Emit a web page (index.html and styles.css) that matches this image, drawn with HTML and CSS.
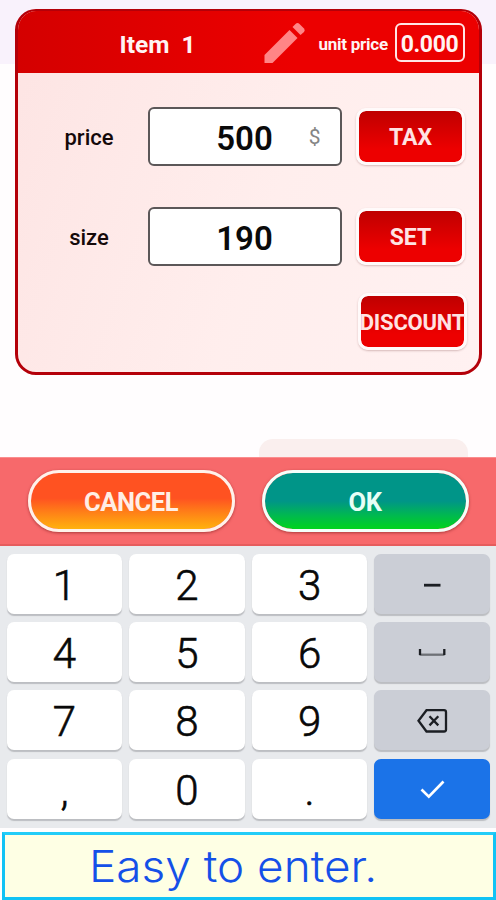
FILE: index.html
```html
<!DOCTYPE html>
<html lang="en">
  <head>
    <meta charset="UTF-8" />
    <meta name="viewport" content="width=device-width, initial-scale=1.0" />
    <title>Unit price calculator</title>
    <link rel="stylesheet" href="styles.css">
  </head>
  <body>
    <!-- Item card -->
    <div class="main-content">
      <div class="item-card">
        <div class="item-header">
          <h1>Item&nbsp; 1</h1>
          <svg class="edit-icon" viewBox="0 0 40 40">
            <path d="M0 32 L25 7 L33 15 L8 40 H0 Z" />
            <path d="M28 4 L31 1 Q33 -1 35 1 L39.5 5.5 Q41 7 39.5 9 L36 12 Z" />
          </svg>
          <span class="unit-label">unit price</span>
          <span class="unit-value">0.000</span>
        </div>
        <div class="item-body">
          <label class="field-label">price</label>
          <div class="field">500<span class="currency">$</span></div>
          <button class="red-button">TAX</button>

          <label class="field-label">size</label>
          <div class="field">190</div>
          <button class="red-button">SET</button>

          <button class="red-button discount-button">DISCOUNT</button>
        </div>
      </div>
      <div class="next-button"></div>
    </div>

    <!-- Confirm bar -->
    <div class="action-bar">
      <button class="pill cancel-button">CANCEL</button>
      <button class="pill ok-button">OK</button>
    </div>

    <!-- Number pad -->
    <div class="keypad">
      <button class="key">1</button>
      <button class="key">2</button>
      <button class="key">3</button>
      <button class="key key-gray">
        <svg width="32" height="32" viewBox="0 0 32 32"><path d="M8 17.2 H24.5" stroke-width="2.8" /></svg>
      </button>
      <button class="key">4</button>
      <button class="key">5</button>
      <button class="key">6</button>
      <button class="key key-gray">
        <svg width="32" height="32" viewBox="0 0 32 32"><path class="soft" d="M3.5 18.7 H28.5" /><path d="M4 13 V19 M28.3 13 V19" /></svg>
      </button>
      <button class="key">7</button>
      <button class="key">8</button>
      <button class="key">9</button>
      <button class="key key-gray">
        <svg width="32" height="32" viewBox="0 0 32 32"><path d="M10.5 6.2 H28 Q30 6.2 30 8.2 V25.5 Q30 27.5 28 27.5 H10.5 L2.5 16.8 Z M13.5 12.2 L22.3 21.4 M22.3 12.2 L13.5 21.4" /></svg>
      </button>
      <button class="key">,</button>
      <button class="key">0</button>
      <button class="key">.</button>
      <button class="key key-enter">
        <svg width="32" height="32" viewBox="0 0 32 32"><path d="M5.5 16.5 L12.8 23.6 L27.5 8.5" stroke-width="2.7" /></svg>
      </button>
    </div>

    <!-- Caption -->
    <div class="caption"><span class="caption-text">Easy to enter.</span></div>
  </body>
</html>
```

FILE: styles.css
```css
* {
  box-sizing: border-box;
}
body {
  margin: 0;
  width: 496px;
  height: 900px;
  overflow: hidden;
  display: flex;
  flex-direction: column;
  font-family: Roboto, "Liberation Sans", sans-serif;
  background-color: #fffdfe;
}
button {
  font-family: inherit;
  border: none;
  padding: 0;
  cursor: pointer;
}
.main-content {
  height: 457px;
  flex: none;
  padding: 9px 14px 0 14.5px;
  background: linear-gradient(#f9f2fc 64px, #fffdfe 64px);
}
.item-card {
  height: 366px;
  border: 3px solid #b40009;
  border-width: 2px 3.5px 3.5px;
  border-radius: 21px;
  background: linear-gradient(110deg, #fde4e3, #ffeeed 55%, #fff1f1);
  overflow: hidden;
}
.item-header {
  height: 61.5px;
  margin: 0 -2px;
  padding: 1px 16px 0 104px;
  display: flex;
  align-items: center;
  color: #fff3f3;
  background: linear-gradient(90deg, #d40000, #ec0000 60%);
}
.item-header h1 {
  width: 144px;
  margin: 0;
  font-size: 24.5px;
  font-weight: 700;
  white-space: nowrap;
  padding-top: 5px;
}
.edit-icon {
  width: 41px;
  height: 40px;
  margin-top: 2px;
  fill: #ff8586;
  flex: none;
  overflow: visible;
}
.unit-label {
  margin-left: 14px;
  width: 76px;
  font-size: 17px;
  font-weight: 700;
  letter-spacing: -0.25px;
  white-space: nowrap;
  padding-top: 3px;
}
.unit-value {
  width: 70px;
  height: 39px;
  flex: none;
  border: 2.5px solid #ffe5e5;
  border-radius: 6px;
  display: flex;
  justify-content: center;
  align-items: center;
  font-size: 23px;
  font-weight: 700;
  letter-spacing: -0.4px;
  padding-top: 4px;
}
.item-body {
  display: grid;
  grid-template-columns: 130px 194px 108px;
  grid-template-rows: 59px 59px 56px;
  row-gap: 41px;
  padding-top: 34.5px;
}
.field-label {
  align-self: center;
  width: 143px;
  text-align: center;
  font-size: 22px;
  font-weight: 500;
  color: #15090a;
  padding-top: 2px;
}
.field {
  position: relative;
  display: flex;
  justify-content: center;
  align-items: center;
  background-color: white;
  border: 2px solid #5b5758;
  border-radius: 6px;
  font-size: 33px;
  font-weight: 600;
  color: #0a0a0a;
  padding-top: 3px;
}
.currency {
  position: absolute;
  right: 19px;
  top: 15px;
  font-size: 21px;
  line-height: 26px;
  font-weight: 400;
  color: #858585;
}
.red-button {
  width: 109px;
  height: 57px;
  margin: 1px 0 0 14.5px;
  border: 3px solid #fffafa;
  border-radius: 10px;
  background: linear-gradient(#bf0000, #ed0000 75%);
  background-clip: padding-box;
  color: #ffe3e3;
  font-size: 23px;
  font-weight: 700;
  padding-top: 2px;
  box-shadow: 0 1px 2px rgba(120, 60, 60, 0.3);
}
.discount-button {
  grid-column: 3;
  margin: -14px 0 0 16.5px;
  font-size: 22px;
  letter-spacing: -0.2px;
  display: flex;
  justify-content: center;
  align-items: center;
}
.next-button {
  width: 209px;
  height: 18px;
  margin: 64px 0 0 244.5px;
  border-radius: 14px 14px 0 0;
  background-color: #faefee;
}
.action-bar {
  height: 89px;
  flex: none;
  display: flex;
  gap: 27px;
  padding: 12px 27.5px 0;
  background-color: #f7696b;
  border-top: 1px solid #fa8d8e;
  border-bottom: 2px solid #e65c5d;
}
.pill {
  width: 207px;
  height: 62px;
  border: 3px solid #fff2ea;
  border-radius: 31px;
  color: #ffeee5;
  font-size: 25.5px;
  font-weight: 700;
  letter-spacing: -0.4px;
  padding-top: 2px;
  box-shadow: 0 1px 3px rgba(110, 20, 20, 0.55);
}
.cancel-button {
  background: linear-gradient(#ff5221 45%, #ff7c18 68%, #ffb20e) padding-box;
}
.ok-button {
  color: #e8fff6;
  border-color: #f4fffa;
  background: linear-gradient(#009588 50%, #00b851 75%, #00d41c) padding-box;
}
.keypad {
  height: 282px;
  flex: none;
  display: grid;
  grid-template-columns: repeat(4, 1fr);
  grid-auto-rows: 60px;
  gap: 8.4px 6.7px;
  padding: 7.5px 6px 0 6.5px;
  background-color: #e8eaed;
}
.key {
  display: flex;
  justify-content: center;
  align-items: center;
  background-color: white;
  border-radius: 7px;
  box-shadow: 0 1.5px 1px #bcbec2;
  font-size: 42px;
  font-weight: 300;
  -webkit-text-stroke: 0.6px #080808;
  color: #080808;
  padding-top: 3px;
}
.key svg {
  fill: none;
  stroke: #1b1e23;
  stroke-width: 2.3;
  margin-top: -3px;
}
.key svg .soft {
  stroke: #6e7176;
}
.key-gray {
  background-color: #cbced6;
}
.key-enter {
  background-color: #1b73e8;
}
.key-enter svg {
  stroke: white;
}
.caption {
  height: 68px;
  flex: none;
  border: 3px solid #11c3f5;
  border-top-color: #22cdf8;
  outline: 2px solid #fff;
  margin: 4px 0 0 2px;
  display: flex;
  align-items: center;
  background-color: #feffe4;
  padding-left: 84px;
}
.caption-text {
  font-family: Inter, "Liberation Sans", sans-serif;
  font-size: 43.5px;
  font-weight: 300;
  line-height: 60px;
  color: #1450e8;
  white-space: nowrap;
  transform: scaleX(1.055);
  transform-origin: left;
}
```
